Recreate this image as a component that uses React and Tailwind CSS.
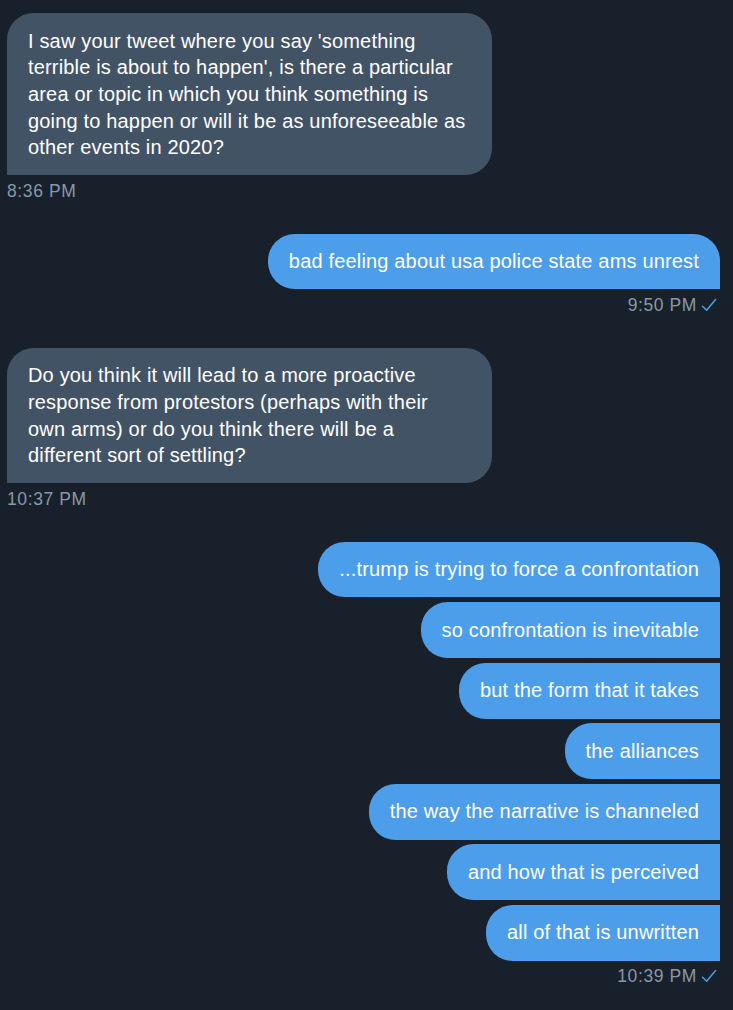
import React from "react";

function Check() {
  return (
    <svg width="16" height="14" viewBox="0 0 16 14" className="ml-[4px] mb-[1px]" fill="none">
      <path d="M1.5 8.2 L5.6 12.2 L14.6 1.6" stroke="#4d9eea" strokeWidth="1.5" strokeLinecap="round" strokeLinejoin="round" />
    </svg>
  );
}

function Received({ lines, time }) {
  return (
    <div className="flex flex-col items-start mb-[29px]">
      <div className="w-[485px] bg-[#435366] text-white text-[20px] leading-[26.67px] tracking-[0.17px] px-[21px] py-[14.5px] rounded-[26.67px] rounded-bl-none">
        {lines.map((l, i) => (
          <div key={i} className="whitespace-nowrap">{l}</div>
        ))}
      </div>
      <div className="mt-[2.7px] text-[17.5px] tracking-[0.6px] leading-[26.67px] text-[#8899a6]">{time}</div>
    </div>
  );
}

function Sent({ msgs, time }) {
  return (
    <div className="flex flex-col items-end mb-[29px]">
      <div className="flex flex-col items-end gap-[4.85px]">
        {msgs.map((m, i) => (
          <div
            key={i}
            className={
              "bg-[#4d9eea] text-white text-[20px] leading-[26.67px] tracking-[0.17px] px-[21px] py-[14.5px] whitespace-nowrap rounded-l-[26.67px] " +
              (i === 0 ? "rounded-tr-[26.67px]" : "")
            }
          >
            {m}
          </div>
        ))}
      </div>
      <div className="mt-[2.7px] flex items-center text-[17.5px] tracking-[0.6px] leading-[26.67px] text-[#8899a6] pr-[3px]">
        <span>{time}</span>
        <Check />
      </div>
    </div>
  );
}

export default function App() {
  return (
    <div
      className="min-h-[1010px] bg-[#17202b] pl-[7px] pr-[13px] pt-[13px]"
      style={{ fontFamily: '"Liberation Sans", Arial, sans-serif' }}
    >
      <Received
        lines={[
          "I saw your tweet where you say 'something",
          "terrible is about to happen', is there a particular",
          "area or topic in which you think something is",
          "going to happen or will it be as unforeseeable as",
          "other events in 2020?",
        ]}
        time="8:36 PM"
      />
      <Sent msgs={["bad feeling about usa police state ams unrest"]} time="9:50 PM" />
      <Received
        lines={[
          "Do you think it will lead to a more proactive",
          "response from protestors (perhaps with their",
          "own arms) or do you think there will be a",
          "different sort of settling?",
        ]}
        time="10:37 PM"
      />
      <Sent
        msgs={[
          "...trump is trying to force a confrontation",
          "so confrontation is inevitable",
          "but the form that it takes",
          "the alliances",
          "the way the narrative is channeled",
          "and how that is perceived",
          "all of that is unwritten",
        ]}
        time="10:39 PM"
      />
    </div>
  );
}
